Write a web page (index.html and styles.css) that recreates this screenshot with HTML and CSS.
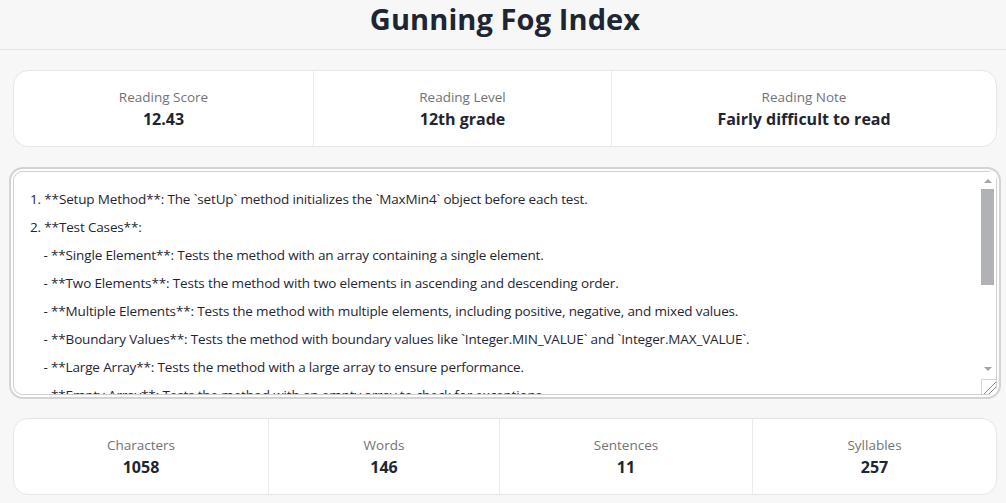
FILE: index.html
```html
<!DOCTYPE html>
<html lang="en">
<head>
<meta charset="utf-8">
<title>Gunning Fog Index</title>
<link rel="stylesheet" href="styles.css">
</head>
<body>
<header class="header">
  <h1 class="title">Gunning Fog Index</h1>
</header>
<main class="main">
  <section class="card card-top">
    <div class="stat"><div class="label">Reading Score</div><div class="value">12.43</div></div>
    <div class="stat"><div class="label">Reading Level</div><div class="value">12th grade</div></div>
    <div class="stat"><div class="label">Reading Note</div><div class="value">Fairly difficult to read</div></div>
  </section>
  <div class="editor">
    <textarea class="input" spellcheck="false">1. **Setup Method**: The `setUp` method initializes the `MaxMin4` object before each test.
2. **Test Cases**:
    - **Single Element**: Tests the method with an array containing a single element.
    - **Two Elements**: Tests the method with two elements in ascending and descending order.
    - **Multiple Elements**: Tests the method with multiple elements, including positive, negative, and mixed values.
    - **Boundary Values**: Tests the method with boundary values like `Integer.MIN_VALUE` and `Integer.MAX_VALUE`.
    - **Large Array**: Tests the method with a large array to ensure performance.
    - **Empty Array**: Tests the method with an empty array to check for exceptions.
    - **Null Array**: Tests the method with a null array to check for exceptions.
3. **Assertions**: Each test uses `assertEquals` to verify that the returned maximum and minimum values match the expected results.
4. **Performance**: The large array test ensures the method handles big inputs efficiently.</textarea>
    <div class="scrollbar" aria-hidden="true">
      <div class="sb-btn"><span class="arrow-up"></span></div>
      <div class="sb-track"><div class="sb-thumb"></div></div>
      <div class="sb-btn"><span class="arrow-down"></span></div>
    </div>
  </div>
  <section class="card card-bottom">
    <div class="stat"><div class="label">Characters</div><div class="value">1058</div></div>
    <div class="stat"><div class="label">Words</div><div class="value">146</div></div>
    <div class="stat"><div class="label">Sentences</div><div class="value">11</div></div>
    <div class="stat"><div class="label">Syllables</div><div class="value">257</div></div>
  </section>
</main>
</body>
</html>
```

FILE: styles.css
```css
* { box-sizing: border-box; }
html, body { margin: 0; padding: 0; }
body {
  background: #f7f7f7;
  font-family: "Open Sans", "Noto Sans", sans-serif;
  color: #1f2633;
}
.header {
  height: 50px;
  padding-left: 4px;
  border-bottom: 1px solid #e3e3e3;
  display: flex;
  align-items: center;
  justify-content: center;
}
.title {
  margin: 0;
  font-size: 29px;
  font-weight: 700;
  letter-spacing: 0.1px;
  color: #1e2533;
  line-height: 1;
  padding-bottom: 12px;
}
.main {
  padding: 20px 9px 8px 13px;
}
.card {
  background: #fff;
  border: 1px solid #e6e6e6;
  border-radius: 15px;
  display: grid;
}
.card-top {
  grid-template-columns: 299fr 298fr 385fr;
  height: 77px;
}
.card-bottom {
  grid-template-columns: 254fr 231fr 253fr 244fr;
  height: 77px;
  margin-top: 23px;
}
.stat {
  display: flex;
  flex-direction: column;
  align-items: center;
  justify-content: center;
  border-left: 1px solid #ebebeb;
  gap: 1px;
}
.stat:first-child { border-left: none; }
.label {
  font-size: 13.5px;
  color: #737373;
  line-height: 20px;
}
.value {
  font-size: 16px;
  font-weight: 700;
  color: #1e2533;
  line-height: 22px;
}
.editor {
  position: relative;
  margin-top: 24px;
}
.input {
  display: block;
  width: 100%;
  height: 224px;
  border: 1px solid #cfcfcf;
  border-radius: 10px;
  box-shadow: 0 0 0 2px #fdfdfd, 0 0 0 4px #d3d3d3;
  padding: 13px 34px 12px 16px;
  font-family: "Open Sans", "Noto Sans", sans-serif;
  font-size: 13.5px;
  letter-spacing: -0.15px;
  line-height: 28px;
  color: #1f2633;
  background: #fff;
  resize: vertical;
  outline: none;
  overflow-y: auto;
}
.input::-webkit-resizer {
  background-color: #fff;
  border-top: 1px solid #d6d6d6;
  border-left: 1px solid #d6d6d6;
  background-image: linear-gradient(135deg, transparent 55%, #8a8a8a 55%, #8a8a8a 60%, transparent 60%, transparent 72%, #8a8a8a 72%, #8a8a8a 77%, transparent 77%);
}
.scrollbar {
  position: absolute;
  top: 1px;
  right: 1px;
  bottom: 18px;
  width: 17px;
  background: #fff;
  display: flex;
  flex-direction: column;
  pointer-events: none;
}
.sb-btn {
  height: 17px;
  flex: none;
  display: flex;
  align-items: center;
  justify-content: center;
}
.arrow-up {
  width: 0;
  height: 0;
  border-left: 4px solid transparent;
  border-right: 4px solid transparent;
  border-bottom: 4px solid #a3a3a3;
}
.arrow-down {
  width: 0;
  height: 0;
  border-left: 4px solid transparent;
  border-right: 4px solid transparent;
  border-top: 4px solid #a3a3a3;
}
.sb-track {
  flex: 1;
  padding: 0 2px;
}
.sb-thumb {
  height: 96px;
  background: #b0b2b6;
}
```
